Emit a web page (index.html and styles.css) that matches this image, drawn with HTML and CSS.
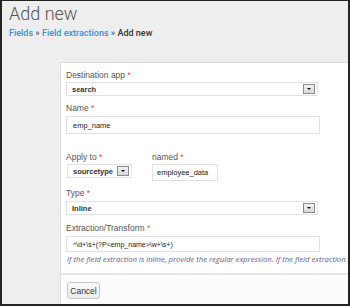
FILE: index.html
```html
<!DOCTYPE html>
<html>
<head>
<meta charset="utf-8">
<link rel="stylesheet" href="styles.css">
</head>
<body>
<div class="frame">
  <h1 class="title">Add new</h1>
  <div class="crumbs"><a class="link">Fields</a> <span class="sep">»</span> <a class="link">Field extractions</a> <span class="sep">»</span> <span class="current">Add new</span></div>
  <div class="panel">
    <div class="body">
      <div class="label">Destination app <span class="req">*</span></div>
      <div class="select wide"><span class="val">search</span><span class="btn"></span></div>

      <div class="label l-name">Name <span class="req">*</span></div>
      <div class="input wide tall"><span class="val">emp_name</span></div>

      <div class="row">
        <div class="col col-a">
          <div class="label">Apply to <span class="req">*</span></div>
          <div class="select small"><span class="val">sourcetype</span><span class="btn"></span></div>
        </div>
        <div class="col">
          <div class="label">named <span class="req">*</span></div>
          <div class="input named"><span class="val">employee_data</span></div>
        </div>
      </div>

      <div class="label l-type">Type <span class="req">*</span></div>
      <div class="select wide type"><span class="val">Inline</span><span class="btn"></span></div>

      <div class="label l-ext">Extraction/Transform <span class="req">*</span></div>
      <div class="input wide ext"><span class="val regex">^\d+\s+(?P&lt;emp_name&gt;\w+\s+)</span></div>
      <div class="help">If the field extraction is inline, provide the regular expression. If the field extraction is a transform, provide the transform name.</div>
    </div>
    <div class="footer">
      <button class="cancel">Cancel</button>
    </div>
  </div>
</div>
</body>
</html>
```

FILE: styles.css
```css
html, body {
  margin: 0;
  padding: 0;
  background: #222;
}
.frame {
  width: 350px;
  height: 306px;
  box-sizing: border-box;
  border-style: solid;
  border-color: #242424;
  border-width: 1px 2px 2px 2px;
  background: #eeeeee;
  overflow: hidden;
  font-family: "Liberation Sans", Arial, sans-serif;
}
.title {
  margin: 3px 0 0 7px;
  font-family: Roboto, "Liberation Sans", sans-serif;
  font-weight: 300;
  font-size: 18px;
  line-height: 20px;
  color: #555;
  white-space: nowrap;
}
.crumbs {
  margin: 3px 0 0 7px;
  font-family: Roboto, "Liberation Sans", sans-serif;
  font-weight: 500;
  font-size: 9px;
  line-height: 12px;
  color: #333;
  white-space: nowrap;
}
.link { color: #3d8fd9; }
.sep { color: #555; }
.current { color: #333; }

.panel {
  margin: 23px 0 0 58px;
  width: 310px;
  height: 244px;
  box-sizing: border-box;
  background: #fff;
  border: 1px solid #dcdcdc;
  border-right: none;
  display: flex;
  flex-direction: column;
  overflow: hidden;
}
.body {
  padding: 7px 0 0 5px;
  height: 210px;
  box-sizing: border-box;
}
.label {
  font-size: 8.5px;
  line-height: 10px;
  height: 10px;
  color: #555;
  white-space: nowrap;
}
.req { color: #e0503c; }
.l-name { margin-top: 7px; }
.l-type { margin-top: 7px; }
.l-ext { margin-top: 8px; }

.select, .input {
  box-sizing: border-box;
  background: #fff;
  border: 1.5px solid #e2e2e2;
  display: flex;
  align-items: center;
  position: relative;
}
.select { margin-top: 2px; height: 14px; }
.input { margin-top: 3px; }
.wide.select { width: 252px; }
.wide.input { width: 254px; }
.tall { height: 18px; }
.ext { height: 16px; margin-top: 3px; }
.type { margin-top: 3px; }

.val {
  font-size: 7.5px;
  color: #222;
  padding-left: 5px;
  white-space: nowrap;
  flex: 1;
}
.select .val { font-weight: bold; color: #333; }
.input .val { padding-left: 6px; }
.regex { font-size: 7px; padding-left: 4px; }

.btn {
  width: 12px;
  height: 10px;
  margin-right: 2px;
  box-sizing: border-box;
  border: 1px solid #8a8a8a;
  background: linear-gradient(#f2f2f2, #d8d8d8);
  display: flex;
  align-items: center;
  justify-content: center;
}
.btn::after {
  content: "";
  width: 0;
  height: 0;
  border-left: 2.5px solid transparent;
  border-right: 2.5px solid transparent;
  border-top: 2.5px solid #111;
}

.row {
  display: flex;
  margin-top: 18px;
}
.col-a { width: 86px; }
.small { width: 65px; margin-left: 1px; }
.named { width: 66px; height: 17px; margin-top: 2px; }
.named .val { padding-left: 4px; }

.help {
  margin-top: 2px;
  font-family: "Open Sans", sans-serif;
  font-style: italic;
  font-size: 7.7px;
  line-height: 10px;
  color: #67608a;
  white-space: nowrap;
  padding-left: 1px;
}

.footer {
  flex: 1;
  border-top: 2px solid #e6e6e6;
  background: #fcfcfc;
  padding: 7px 0 0 6px;
}
.cancel {
  display: block;
  width: 33px;
  height: 17px;
  margin: 0;
  padding: 0;
  box-sizing: border-box;
  border: 1px solid #c8c8c8;
  border-radius: 3px;
  background: linear-gradient(#fafafa, #ececec);
  font-family: "Liberation Sans", Arial, sans-serif;
  font-size: 8.5px;
  color: #333;
}
```
